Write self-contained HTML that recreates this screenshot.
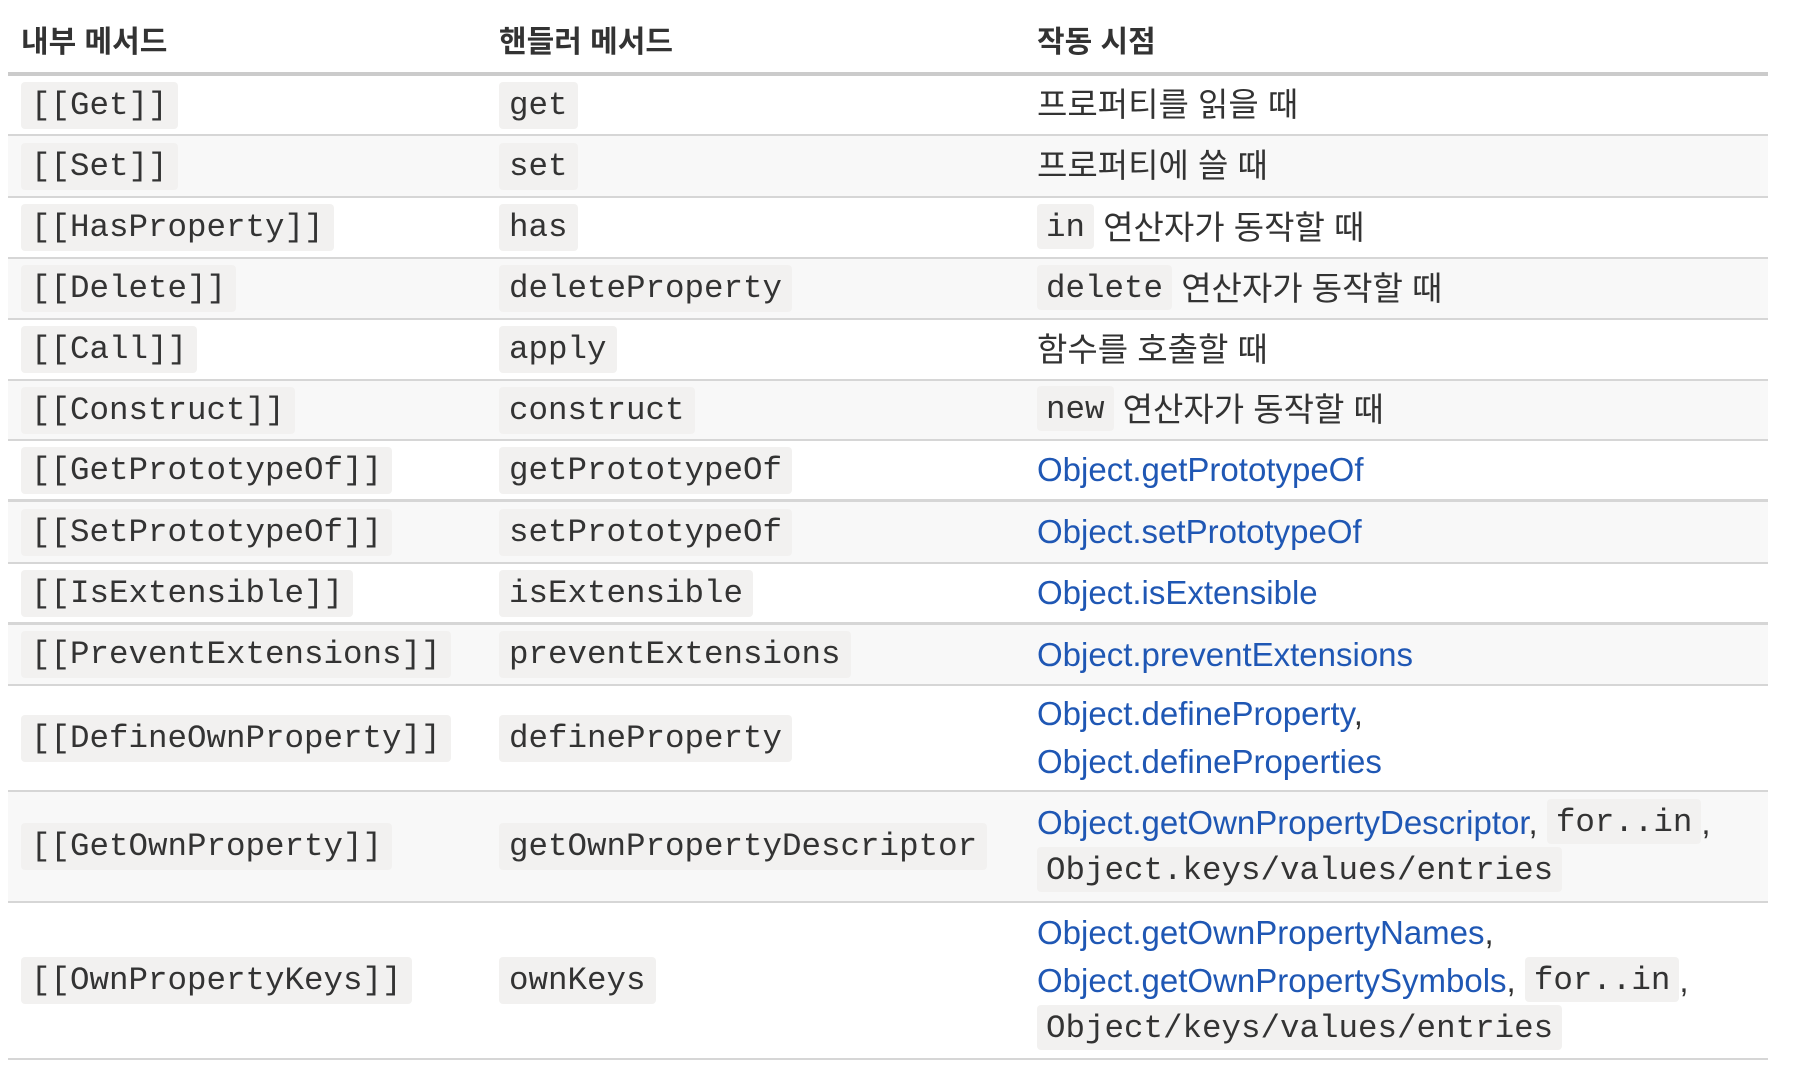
<!DOCTYPE html>
<html><head><meta charset="utf-8"><style>
*{box-sizing:border-box;margin:0;padding:0}
body{width:1810px;height:1090px;background:#fff;font-family:"Liberation Sans","Noto Sans CJK KR",sans-serif;color:#333;font-size:33px;overflow:hidden}
.t{position:absolute;left:8px;top:0;width:1760px}
.r{display:flex;align-items:center;border-bottom:2px solid #d6d6d6}
.r.a{background:#f8f8f8}
.h{height:76px;border-bottom:4px solid #cbcbcb;font-weight:bold;font-size:30px;padding-top:6px}
.h .c3{line-height:normal}
.c1{width:478px;padding-left:13px}
.c2{width:538px;padding-left:13px}
.c3{flex:1;padding-left:13px;line-height:48px}
code{font-family:"Liberation Mono",monospace;font-size:32.5px;background:#f2f1f0;border-radius:4px;padding:6px 10px;color:#333;display:inline-block;line-height:35px}
.c3 code{display:inline;padding:5px 9px 3px;position:relative;top:-3px}
a{color:#1f57b4;text-decoration:none}
</style></head><body><div class="t">
<div class="r h"><div class="c1">내부 메서드</div><div class="c2">핸들러 메서드</div><div class="c3">작동 시점</div></div>
<div class="r" style="height:60px"><div class="c1"><code>[[Get]]</code></div><div class="c2"><code>get</code></div><div class="c3">프로퍼티를 읽을 때</div></div>
<div class="r a" style="height:62px"><div class="c1"><code>[[Set]]</code></div><div class="c2"><code>set</code></div><div class="c3">프로퍼티에 쓸 때</div></div>
<div class="r" style="height:61px"><div class="c1"><code>[[HasProperty]]</code></div><div class="c2"><code>has</code></div><div class="c3"><code>in</code> 연산자가 동작할 때</div></div>
<div class="r a" style="height:61px"><div class="c1"><code>[[Delete]]</code></div><div class="c2"><code>deleteProperty</code></div><div class="c3"><code>delete</code> 연산자가 동작할 때</div></div>
<div class="r" style="height:61px"><div class="c1"><code>[[Call]]</code></div><div class="c2"><code>apply</code></div><div class="c3">함수를 호출할 때</div></div>
<div class="r a" style="height:60px"><div class="c1"><code>[[Construct]]</code></div><div class="c2"><code>construct</code></div><div class="c3"><code>new</code> 연산자가 동작할 때</div></div>
<div class="r" style="height:61px;border-bottom-width:3px"><div class="c1"><code>[[GetPrototypeOf]]</code></div><div class="c2"><code>getPrototypeOf</code></div><div class="c3"><a>Object.getPrototypeOf</a></div></div>
<div class="r a" style="height:62px"><div class="c1"><code>[[SetPrototypeOf]]</code></div><div class="c2"><code>setPrototypeOf</code></div><div class="c3"><a>Object.setPrototypeOf</a></div></div>
<div class="r" style="height:61px;border-bottom-width:3px"><div class="c1"><code>[[IsExtensible]]</code></div><div class="c2"><code>isExtensible</code></div><div class="c3"><a>Object.isExtensible</a></div></div>
<div class="r a" style="height:61px"><div class="c1"><code>[[PreventExtensions]]</code></div><div class="c2"><code>preventExtensions</code></div><div class="c3"><a>Object.preventExtensions</a></div></div>
<div class="r" style="height:106px"><div class="c1"><code>[[DefineOwnProperty]]</code></div><div class="c2"><code>defineProperty</code></div><div class="c3"><a>Object.defineProperty</a>,<br><a>Object.defineProperties</a></div></div>
<div class="r a" style="height:111px"><div class="c1"><code>[[GetOwnProperty]]</code></div><div class="c2"><code>getOwnPropertyDescriptor</code></div><div class="c3"><a>Object.getOwnPropertyDescriptor</a>, <code>for..in</code>,<br><code>Object.keys/values/entries</code></div></div>
<div class="r" style="height:157px"><div class="c1"><code>[[OwnPropertyKeys]]</code></div><div class="c2"><code>ownKeys</code></div><div class="c3"><a>Object.getOwnPropertyNames</a>,<br><a>Object.getOwnPropertySymbols</a>, <code>for..in</code>,<br><code>Object/keys/values/entries</code></div></div>
</div></body></html>
